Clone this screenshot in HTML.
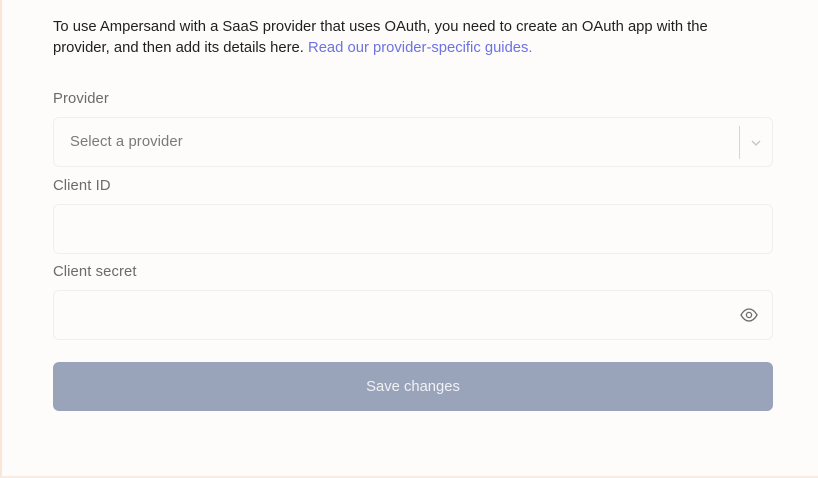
<!DOCTYPE html>
<html><head><style>
html,body{margin:0;padding:0}
body{width:818px;height:478px;background:#fdfcfb;font-family:"Liberation Sans",sans-serif;position:relative;overflow:hidden}
.lb{position:absolute;left:0;top:0;width:2px;height:478px;background:#fbe5d6}
.bb{position:absolute;left:0;top:476px;width:818px;height:2px;background:#f6ece4}
p{position:absolute;left:53px;top:17px;margin:0;font-size:14.8px;letter-spacing:0px;line-height:21px;color:#1f1f1f;width:680px}
p a{color:#6d73e0;text-decoration:none}
.l{position:absolute;left:53px;font-size:14.8px;letter-spacing:0.1px;color:#6b6b6b}
.box{position:absolute;left:53px;width:718px;height:48px;border:1px solid #f1efee;border-radius:6px;background:#fdfcfb}
.btn{position:absolute;left:53px;top:362px;width:720px;height:49px;background:#99a3ba;border-radius:6px;color:#f0f1f5;font-size:14.8px;text-align:center;line-height:51px}
</style></head><body>
<div class="lb"></div><div class="bb"></div>
<p>To use Ampersand with a SaaS provider that uses OAuth, you need to create an OAuth app with the provider, and then add its details here. <a>Read our provider-specific guides.</a></p>
<div class="l" style="top:91px">Provider</div>
<div class="box" style="top:117px">
<span style="position:absolute;left:16px;top:16px;font-size:14.8px;letter-spacing:0.1px;color:#7a7a7a">Select a provider</span>
<div style="position:absolute;left:685px;top:8px;width:1px;height:33px;background:#d6d6d6"></div>
<svg style="position:absolute;left:697px;top:21px" width="10" height="8" viewBox="0 0 10 8"><path d="M1 2l4 4 4-4" fill="none" stroke="#c4c4c4" stroke-width="1.3"/></svg>
</div>
<div class="l" style="top:178px">Client ID</div>
<div class="box" style="top:204px"></div>
<div class="l" style="top:264px">Client secret</div>
<div class="box" style="top:290px">
<svg style="position:absolute;left:686px;top:16px" width="18" height="16" viewBox="0 0 18 16"><path d="M1 8C3.5 3.5 6 2 9 2s5.5 1.5 8 6c-2.5 4.5-5 6-8 6S3.5 12.5 1 8z" fill="none" stroke="#6b6b6b" stroke-width="1.3"/><circle cx="9" cy="8" r="2.6" fill="none" stroke="#6b6b6b" stroke-width="1.3"/></svg>
</div>
<div class="btn">Save changes</div>
</body></html>
